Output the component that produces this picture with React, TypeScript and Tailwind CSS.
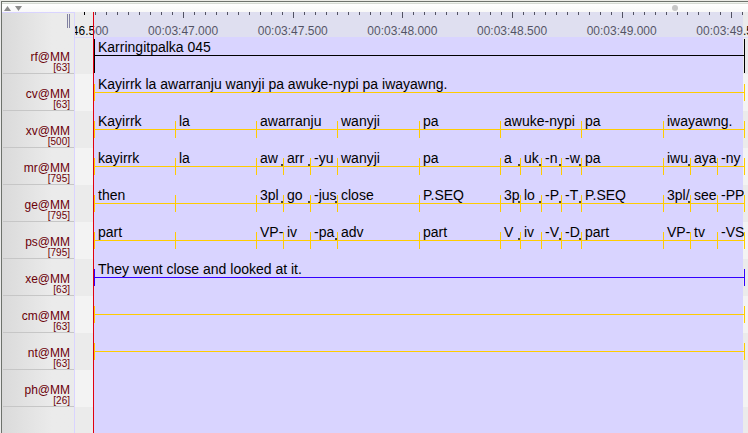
import React from "react";

type Segment = { text: string; span: number; cut?: boolean };
type Tier = { name: string; count: number; kind: "root" | "child" | "free"; segments: Segment[] };

const seg = (text: string, span: number, cut = false): Segment => ({ text, span, cut });

const tiers: Tier[] = [
  { name: "rf@MM", count: 63, kind: "root", segments: [seg("Karringitpalka 045", 650)] },
  {
    name: "cv@MM",
    count: 63,
    kind: "child",
    segments: [seg("Kayirrk la awarranju wanyji pa awuke-nypi pa iwayawng.", 650)],
  },
  {
    name: "xv@MM",
    count: 500,
    kind: "child",
    segments: [
      seg("Kayirrk", 81),
      seg("la", 81),
      seg("awarranju", 81),
      seg("wanyji", 82),
      seg("pa", 81),
      seg("awuke-nypi", 81),
      seg("pa", 82),
      seg("iwayawng.", 81),
    ],
  },
  {
    name: "mr@MM",
    count: 795,
    kind: "child",
    segments: [
      seg("kayirrk", 81),
      seg("la", 81),
      seg("aw", 27, true),
      seg("arr", 27, true),
      seg("-yu", 27),
      seg("wanyji", 82),
      seg("pa", 81),
      seg("a", 20, true),
      seg("uk", 21, true),
      seg("-n", 20, true),
      seg("-w", 20, true),
      seg("pa", 82),
      seg("iwu", 27, true),
      seg("aya", 27),
      seg("-ny", 27),
    ],
  },
  {
    name: "ge@MM",
    count: 795,
    kind: "child",
    segments: [
      seg("then", 81),
      seg("", 81),
      seg("3pl", 27, true),
      seg("go", 27, true),
      seg("-jus", 27, true),
      seg("close", 82),
      seg("P.SEQ", 81),
      seg("3p", 20, true),
      seg("lo", 21, true),
      seg("-P", 20, true),
      seg("-T", 20, true),
      seg("P.SEQ", 82),
      seg("3pl/", 27, true),
      seg("see", 27),
      seg("-PP", 27),
    ],
  },
  {
    name: "ps@MM",
    count: 795,
    kind: "child",
    segments: [
      seg("part", 81),
      seg("", 81),
      seg("VP-", 27),
      seg("iv", 27),
      seg("-pa", 27, true),
      seg("adv", 82),
      seg("part", 81),
      seg("V", 20, true),
      seg("iv", 21),
      seg("-V", 20, true),
      seg("-D", 20, true),
      seg("part", 82),
      seg("VP-", 27),
      seg("tv", 27),
      seg("-VS", 27),
    ],
  },
  { name: "xe@MM", count: 63, kind: "free", segments: [seg("They went close and looked at it.", 650)] },
  { name: "cm@MM", count: 63, kind: "child", segments: [seg("", 650)] },
  { name: "nt@MM", count: 63, kind: "child", segments: [seg("", 650)] },
  { name: "ph@MM", count: 26, kind: "child", segments: [] },
];

const lineColor = { root: "bg-black", child: "bg-[#ffcc00]", free: "bg-[#3300ff]" };
const tickShape = {
  root: "top-[2px] h-[34px] bg-black",
  child: "top-[10px] h-[17px] bg-[#ffcc00]",
  free: "top-[10px] h-[17px] bg-[#3300ff]",
};

// The ruler shows about three seconds; one tick stands for 50 ms.
const RULER_SPAN = 673;
const ORIGIN = 108.1;
const TICK_STEP = 10.965;
const rulerPercent = (tick: number) => `${((ORIGIN + tick * TICK_STEP) / RULER_SPAN) * 100}%`;
const ticks = Array.from({ length: 61 }, (_, i) => i - 9);
const times = [
  { tick: -10, label: "00:03:46.500" },
  { tick: 0, label: "00:03:47.000" },
  { tick: 10, label: "00:03:47.500" },
  { tick: 20, label: "00:03:48.000" },
  { tick: 30, label: "00:03:48.500" },
  { tick: 40, label: "00:03:49.000" },
  { tick: 50, label: "00:03:49.500" },
];

function Toolbar() {
  return (
    <div className="flex h-2 items-center bg-linear-to-b from-white to-[#f8f8f8] pl-[2px]">
      <button type="button" aria-label="Collapse viewer" className="flex h-2 w-[11px] items-center">
        <svg viewBox="0 0 7 5" className="h-[5px] w-[7px]" fill="#8c8c8c">
          <path d="M3.5 0 7 5H0z" />
        </svg>
      </button>
      <button type="button" aria-label="Expand viewer" className="flex h-2 w-[11px] items-center">
        <svg viewBox="0 0 7 5" className="h-[5px] w-[7px]" fill="#8c8c8c">
          <path d="M0 0h7L3.5 5z" />
        </svg>
      </button>
      <input
        type="range"
        aria-label="Zoom"
        defaultValue={50}
        className="mr-[1px] ml-auto h-[6px] w-36 appearance-none bg-transparent [&::-webkit-slider-thumb]:size-[6px] [&::-webkit-slider-thumb]:appearance-none [&::-webkit-slider-thumb]:rounded-full [&::-webkit-slider-thumb]:bg-[#c6c6c6]"
      />
    </div>
  );
}

function TierLabels() {
  return (
    <aside className="w-[72px] shrink-0 border-t border-[#d9d4ff] bg-linear-to-r from-[#dadada] to-[#ebebeb] to-70% text-right text-[#6b0008]">
      <div className="flex h-6 justify-end pt-px pr-1">
        <div className="h-[14px] w-[3px] border-x border-[#8080a0]" />
      </div>
      <ul className="pl-px">
        {tiers.map((tier) => (
          <li key={tier.name} className="h-[37px] border-b border-[#c6c6c6] pt-[14px] pr-1">
            <div className="text-[12px] leading-[12px]">{tier.name}</div>
            <div className="text-[10px] leading-[10px]">[{tier.count}]</div>
          </li>
        ))}
      </ul>
    </aside>
  );
}

function Ruler() {
  return (
    <div className="relative h-[25px] overflow-hidden bg-[#ebebeb] text-[12px] leading-[12px]">
      {ticks.map((tick) => (
        <span
          key={tick}
          className={`absolute top-0 w-px bg-black ${tick % 10 === 0 ? "h-[6px]" : "h-[3px]"}`}
          style={{ left: rulerPercent(tick) }}
        />
      ))}
      {times.map((time) => (
        <span
          key={time.label}
          className="absolute top-[13px] -translate-x-1/2 whitespace-nowrap"
          style={{ left: rulerPercent(time.tick) }}
        >
          {time.label}
        </span>
      ))}
      <div className="absolute inset-y-0 right-[5px] left-[19px] bg-[#cdcdf7]/40" />
    </div>
  );
}

function TierRow({ tier, index }: { tier: Tier; index: number }) {
  return (
    <div
      className={`h-[37px] pr-[3px] pl-[19px] ${index % 2 ? "bg-[#f3f3f3]" : "bg-[#ebebeb]"} ${
        index === 0 ? "shadow-[inset_0_1px_#dcd8fa]" : ""
      }`}
    >
      {tier.segments.length > 0 && (
        <div className="relative z-10 flex h-full">
          <span className={`absolute inset-x-0 top-[18px] h-px ${lineColor[tier.kind]}`} />
          {tier.segments.map((s, i) => (
            <div key={i} className="relative min-w-0 basis-0" style={{ flexGrow: s.span }}>
              <span className={`absolute left-0 w-px ${tickShape[tier.kind]}`} />
              <div className="relative overflow-hidden pt-[2px] pl-1 text-[14px] leading-[16px] whitespace-nowrap text-black">
                {s.text || "\u00a0"}
              </div>
              {s.cut && <span className="absolute top-[16px] right-0 size-[2px] bg-[#444444]" />}
            </div>
          ))}
          <div className="relative w-px">
            <span className={`absolute left-0 w-px ${tickShape[tier.kind]}`} />
          </div>
        </div>
      )}
    </div>
  );
}

export default function App() {
  return (
    <div className="flex min-h-screen flex-col bg-[#ebebeb] font-['Liberation_Sans',Arial,sans-serif]">
      <div className="h-px bg-[#ebebe6]" />
      <div className="ml-px flex flex-1 flex-col border-t border-l border-[#6e726c]">
        <div className="h-px bg-[#f0f4ee]" />
        <div className="h-px bg-[#d6dad4]" />
        <Toolbar />
        <main className="flex flex-1">
          <TierLabels />
          <div className="w-px shrink-0 bg-[#d9d4ff]" />
          <section aria-label="Timeline" className="relative min-w-0 flex-1">
            <Ruler />
            <div className="absolute top-[25px] right-[5px] bottom-0 left-[19px] bg-[#d9d4ff]" />
            {tiers.map((tier, index) => (
              <TierRow key={tier.name} tier={tier} index={index} />
            ))}
            <div className="absolute inset-y-0 left-[18px] w-px bg-[#e00010]" />
          </section>
        </main>
      </div>
    </div>
  );
}
